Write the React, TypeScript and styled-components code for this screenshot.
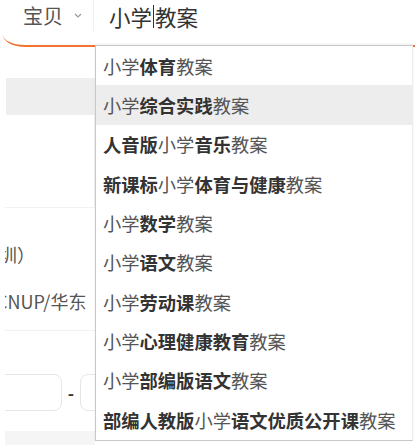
import React from "react";
import styled, { createGlobalStyle } from "styled-components";

const GlobalStyle = createGlobalStyle`
  html, body { margin: 0; padding: 0; background: #fff; }
  body { font-family: "Noto Sans CJK SC", "Noto Sans", sans-serif; }
`;

const Page = styled.div`
  position: relative;
  width: 415px;
  height: 445px;
  overflow: hidden;
  background: #fff;
`;

const SearchBar = styled.div`
  margin-left: 3px;
  height: 45px;
  border-bottom: 2px solid #f07535;
  border-bottom-left-radius: 22px 12px;
  display: flex;
  align-items: flex-start;
`;

const Category = styled.div`
  display: flex;
  align-items: center;
  gap: 11px;
  width: 91px;
  height: 31px;
  padding-left: 20px;
  box-sizing: border-box;
  font-size: 20px;
  color: #555;
  border-right: 1px solid #f0f0f0;
`;

const QueryText = styled.div`
  display: flex;
  align-items: center;
  height: 32px;
  padding-left: 15px;
  font-size: 21.5px;
  color: #333;
`;

const Caret = styled.span`
  display: inline-block;
  width: 1px;
  height: 23px;
  margin: 0 1px 0 1px;
  background: #333;
`;

const LeftColumn = styled.div`
  margin-left: 5px;
  width: 90px;
  overflow: hidden;
  display: flex;
  flex-direction: column;
`;

const GreyBand = styled.div<{ $top: number; $height: number; $indent: number; $color: string }>`
  margin-top: ${(p) => p.$top}px;
  margin-left: ${(p) => p.$indent}px;
  height: ${(p) => p.$height}px;
  background: ${(p) => p.$color};
`;

const Panel = styled.div<{ $height: number }>`
  height: ${(p) => p.$height}px;
  box-sizing: border-box;
  border-bottom: 1px solid #f1f1f1;
  border-right: 1px solid #f4f4f4;
`;

const FilterBlock = styled.div`
  padding-top: 22px;
  height: 123px;
  box-sizing: border-box;
  border-bottom: 1px solid #f1f1f1;
  display: flex;
  flex-direction: column;
`;

const FilterItem = styled.div<{ $shift: number }>`
  height: 47px;
  display: flex;
  align-items: center;
  margin-left: ${(p) => p.$shift}px;
  font-size: 18px;
  color: #555;
  white-space: nowrap;
`;

const PriceRow = styled.div`
  margin-top: 43px;
  height: 37px;
  display: flex;
  align-items: center;
`;

const PriceBox = styled.div<{ $width: number; $shift: number }>`
  width: ${(p) => p.$width}px;
  margin-left: ${(p) => p.$shift}px;
  height: 37px;
  box-sizing: border-box;
  border: 1px solid #e6e6e6;
  border-radius: 8px;
  flex-shrink: 0;
`;

const Dash = styled.span`
  width: 18px;
  text-align: center;
  font-size: 17px;
  font-weight: 700;
  color: #333;
  flex-shrink: 0;
`;

const Dropdown = styled.ul`
  position: absolute;
  left: 95px;
  top: 45px;
  width: 318px;
  margin: 0;
  padding: 0 0 1px 0;
  list-style: none;
  box-sizing: border-box;
  background: #fff;
  border: 1px solid #c8c8c8;
  border-right-color: #eee;
  box-shadow: 0 -1px 2px rgba(0, 0, 0, 0.08);
`;

const Suggestion = styled.li<{ $active?: boolean }>`
  height: 39.33px;
  display: flex;
  align-items: center;
  padding: 0 19px 0 7px;
  overflow: hidden;
  white-space: nowrap;
  font-size: 18.3px;
  color: #555;
  background: ${(p) => (p.$active ? "#ededed" : "#fff")};

  b {
    font-weight: 700;
    color: #333;
  }
`;

const Chevron = () => (
  <svg width="8" height="5" viewBox="0 0 8 5" aria-hidden>
    <path d="M1 1l3 3 3-3" fill="none" stroke="#999" strokeWidth="1.2" />
  </svg>
);

type Part = [string, boolean];
const suggestions: Part[][] = [
  [["小学", false], ["体育", true], ["教案", false]],
  [["小学", false], ["综合实践", true], ["教案", false]],
  [["人音版", true], ["小学", false], ["音乐", true], ["教案", false]],
  [["新课标", true], ["小学", false], ["体育与健康", true], ["教案", false]],
  [["小学", false], ["数学", true], ["教案", false]],
  [["小学", false], ["语文", true], ["教案", false]],
  [["小学", false], ["劳动课", true], ["教案", false]],
  [["小学", false], ["心理健康教育", true], ["教案", false]],
  [["小学", false], ["部编版语文", true], ["教案", false]],
  [["部编人教版", true], ["小学", false], ["语文优质公开课", true], ["教案", false]],
];

export default function App() {
  return (
    <Page>
      <GlobalStyle />
      <SearchBar>
        <Category>
          宝贝
          <Chevron />
        </Category>
        <QueryText>
          小学
          <Caret />
          教案
        </QueryText>
      </SearchBar>
      <LeftColumn>
        <GreyBand $top={31} $height={37} $indent={1} $color="#eeeeee" />
        <Panel $height={93} />
        <FilterBlock>
          <FilterItem $shift={-6}>圳）</FilterItem>
          <FilterItem $shift={-9}>CNUP/华东</FilterItem>
        </FilterBlock>
        <PriceRow>
          <PriceBox $width={82} $shift={-25} />
          <Dash>-</Dash>
          <PriceBox $width={60} $shift={0} />
        </PriceRow>
        <GreyBand $top={20} $height={20} $indent={0} $color="#f5f5f5" />
      </LeftColumn>
      <Dropdown>
        {suggestions.map((parts, i) => (
          <Suggestion key={i} $active={i === 1}>
            {parts.map(([t, bold], j) => (bold ? <b key={j}>{t}</b> : <span key={j}>{t}</span>))}
          </Suggestion>
        ))}
      </Dropdown>
    </Page>
  );
}
